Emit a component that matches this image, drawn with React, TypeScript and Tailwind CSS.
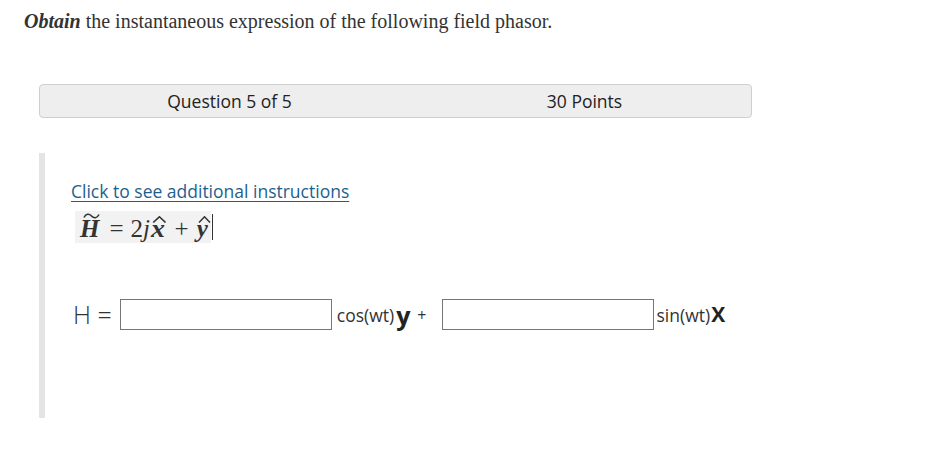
import React from "react";

function Hat({ w = 13, left = 2, top = 1 }: { w?: number; left?: number; top?: number }) {
  return (
    <svg
      className="absolute"
      style={{ left, top }}
      width={w}
      height={7}
      viewBox={`0 0 ${w} 7`}
    >
      <path d={`M1 6.5 L${w / 2} 0.8 L${w - 1} 6.5`} fill="none" stroke="#333" strokeWidth={1.5} />
    </svg>
  );
}

function Tilde() {
  return (
    <svg className="absolute" style={{ left: 3, top: -3 }} width={17} height={6} viewBox="0 0 17 6">
      <path d="M1 4.5 C3 0.5, 6 0.5, 8.5 3 C11 5.5, 14 5.5, 16 1.5" fill="none" stroke="#333" strokeWidth={1.6} />
    </svg>
  );
}

export default function App() {
  return (
    <div className="w-[931px] h-[449px] bg-white text-[#333] overflow-hidden">
      <p
        className="pl-[24px] pt-[9px] text-[20px] leading-[24px] text-[#333]"
        style={{ fontFamily: '"Liberation Serif", serif' }}
      >
        <b className="italic">Obtain</b> the instantaneous expression of the following field phasor.
      </p>

      <div
        className="ml-[39px] mt-[51px] w-[713px] h-[34px] bg-[#eeeeee] border border-[#cfcfcf] rounded-[4px] grid grid-cols-[355px_345px] items-center pl-[12px] text-[17.5px] text-[#222] overflow-hidden"
        style={{ fontFamily: '"Open Sans", sans-serif' }}
      >
        <div className="text-center whitespace-nowrap">Question 5 of 5</div>
        <div className="text-center whitespace-nowrap w-[355px]">30 Points</div>
      </div>

      <div
        className="ml-[39px] mt-[35px] h-[265px] border-l-[6px] border-[#e4e4e4] pl-[26px] pt-[26px]"
        style={{ fontFamily: '"Open Sans", sans-serif' }}
      >
        <a className="text-[17.5px] leading-[24px] text-[#1d5f8f] underline underline-offset-[3px] decoration-1">
          Click to see additional instructions
        </a>
        <div className="mt-[7px] flex items-center">
          <span
            className="ml-[4px] flex items-center h-[32px] bg-[#f2f2f2] pl-[5px] pr-[3px] pt-[2px] text-[25px] leading-[25px] text-[#333]"
            style={{ fontFamily: '"Liberation Serif", "DejaVu Serif", serif' }}
          >
            <b className="italic relative">
              H
              <Tilde />
            </b>
            <span className="ml-[10px] mr-[7px]">=</span>
            <span>2</span>
            <span className="italic">j</span>
            <b className="italic relative ml-[1px] inline-block scale-x-[1.12] origin-left">
              x
              <Hat w={13} left={1} top={0} />
            </b>
            <span className="ml-[11px] mr-[8px]">+</span>
            <b className="italic relative">
              y
              <Hat w={13} left={1} top={0} />
            </b>
          </span>
          <span className="w-[1px] h-[26px] bg-[#333] ml-[1px]" />
        </div>

        <div className="mt-[53px] flex items-center">
          <span className="text-[25px] font-light text-[#333] mr-[8px] ml-[2px] whitespace-nowrap">H =</span>
          <input className="w-[212px] h-[31px] border border-[#767676] bg-white outline-none" />
          <span className="ml-[5px] text-[17.5px] text-[#333]">cos(wt)</span>
          <b className="ml-[2px] text-[25px] leading-[20px] text-[#222] mt-[1px]">y</b>
          <span className="ml-[7px] text-[16px] text-[#333]">+</span>
          <input className="ml-[15px] w-[212px] h-[31px] border border-[#767676] bg-white outline-none" />
          <span className="ml-[3px] text-[17.5px] text-[#333]">sin(wt)</span>
          <b className="ml-[1px] text-[21px] text-[#222]">X</b>
        </div>
      </div>
    </div>
  );
}
